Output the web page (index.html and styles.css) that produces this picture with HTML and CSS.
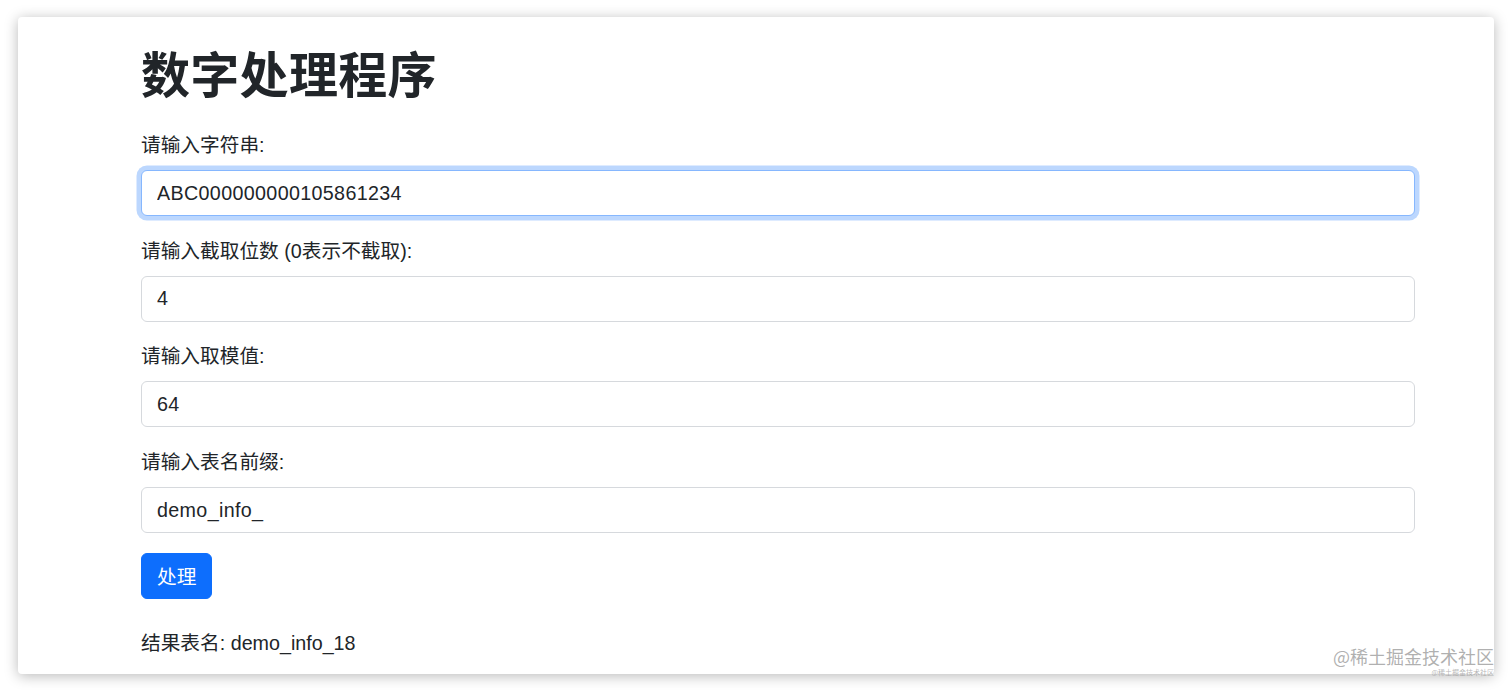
FILE: index.html
```html
<!DOCTYPE html>
<html lang="zh-CN">
<head>
<meta charset="utf-8">
<title>数字处理程序</title>
<link rel="stylesheet" href="styles.css">
</head>
<body>
<div class="stage">
  <div class="window">
    <h1 class="title">数字处理程序</h1>
    <form class="form">
      <div class="group">
        <label class="label" for="s">请输入字符串:</label>
        <input class="control focused" id="s" type="text" value="ABC000000000105861234">
      </div>
      <div class="group">
        <label class="label" for="n">请输入截取位数 (0表示不截取):</label>
        <input class="control" id="n" type="text" value="4">
      </div>
      <div class="group">
        <label class="label" for="m">请输入取模值:</label>
        <input class="control" id="m" type="text" value="64">
      </div>
      <div class="group">
        <label class="label" for="p">请输入表名前缀:</label>
        <input class="control" id="p" type="text" value="demo_info_">
      </div>
      <button class="btn" type="button">处理</button>
    </form>
    <p class="result">结果表名: demo_info_18</p>
  </div>
  <div class="watermark">@稀土掘金技术社区</div>
  <div class="watermark-small">@稀土掘金技术社区</div>
</div>
</body>
</html>
```

FILE: styles.css
```css
html, body {
  margin: 0;
  padding: 0;
  background: #ffffff;
}

body {
  width: 1512px;
  height: 692px;
  overflow: hidden;
  font-family: "Liberation Sans", "Noto Sans CJK SC", sans-serif;
  color: #212529;
}

.stage {
  position: relative;
  box-sizing: border-box;
  width: 1512px;
  height: 692px;
  padding: 17px 18px 18px 18px;
}

.window {
  box-sizing: border-box;
  height: 657px;
  background: #ffffff;
  border-radius: 4px;
  box-shadow: 0 2px 14px rgba(0, 0, 0, 0.28);
  padding: 25px 79px 0 123px;
}

.title {
  margin: 0 0 29px 0;
  font-size: 49px;
  line-height: 59px;
  font-weight: 700;
  font-family: "Noto Sans CJK SC", sans-serif;
  letter-spacing: 0.3px;
}

.form {
  display: flex;
  flex-direction: column;
  align-items: flex-start;
  margin: 0;
}

.group {
  display: flex;
  flex-direction: column;
  width: 100%;
  margin-bottom: 19.7px;
}

.label {
  font-size: 19.7px;
  line-height: 30px;
  margin-bottom: 10px;
}

.control {
  box-sizing: border-box;
  width: 100%;
  height: 46px;
  padding: 7px 15px;
  font-family: "Liberation Sans", "Noto Sans CJK SC", sans-serif;
  font-size: 19.7px;
  line-height: 30px;
  letter-spacing: 0.35px;
  color: #212529;
  background: #ffffff;
  border: 1px solid #d6d9dd;
  border-radius: 6px;
  outline: none;
}

.control.focused {
  border-color: #86b7fe;
  box-shadow: 0 0 0 4.5px rgba(13, 110, 253, 0.28);
}

.btn {
  box-sizing: border-box;
  height: 46px;
  padding: 7px 15px;
  font-family: "Noto Sans CJK SC", sans-serif;
  font-size: 19.7px;
  line-height: 30px;
  color: #ffffff;
  background: #0d6efd;
  border: 1px solid #0d6efd;
  border-radius: 6px;
}

.result {
  margin: 29.5px 0 0 0;
  font-size: 19.7px;
  line-height: 30px;
}

.watermark {
  position: absolute;
  right: 18px;
  top: 646px;
  font-family: "Noto Sans CJK SC", sans-serif;
  font-size: 18px;
  line-height: 21px;
  color: rgba(150, 150, 150, 0.75);
}

.watermark-small {
  position: absolute;
  right: 18px;
  top: 669px;
  font-family: "Noto Sans CJK SC", sans-serif;
  font-size: 7px;
  line-height: 7px;
  color: rgba(150, 150, 150, 0.7);
}
```
